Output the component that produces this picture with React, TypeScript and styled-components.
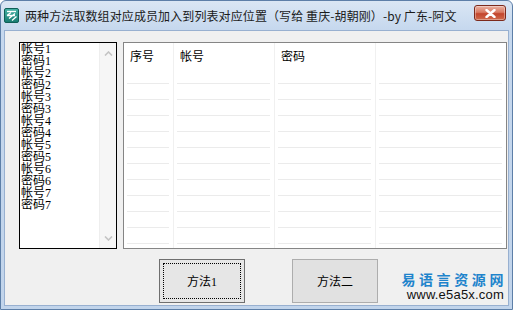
import styled, { createGlobalStyle } from 'styled-components';

const GlobalStyle = createGlobalStyle`
  html, body {
    margin: 0;
    padding: 0;
  }
  body {
    width: 513px;
    height: 310px;
    overflow: hidden;
    font-family: "Liberation Serif", "Noto Sans CJK SC", serif;
    color: #000;
  }
  * {
    box-sizing: border-box;
  }
`;

const LIST_ITEMS = [1, 2, 3, 4, 5, 6, 7].flatMap((n) => [`帐号${n}`, `密码${n}`]);
const COLUMNS = [
  { title: '序号', width: 50 },
  { title: '帐号', width: 101 },
  { title: '密码', width: 101 },
  { title: '', width: 0 },
];
const ROW_COUNT = 12;

function AppIcon() {
  return (
    <svg width="15" height="15" viewBox="0 0 15 15">
      <defs>
        <linearGradient id="ig" x1="0" y1="0" x2="0" y2="1">
          <stop offset="0" stopColor="#45b3a6" />
          <stop offset="1" stopColor="#167a70" />
        </linearGradient>
      </defs>
      <rect x="0.5" y="0.5" width="14" height="14" rx="1.5" fill="url(#ig)" stroke="#0f5f57" />
      <path d="M3 3.5H12" stroke="#fff" strokeWidth="1.4" />
      <path d="M3 7.5L7 4.5M5 10.5L11 5.5M8 12.5L12.5 8.5M3 7.5H11" stroke="#fff" strokeWidth="1.3" fill="none" />
    </svg>
  );
}

function Chevron({ up }: { up?: boolean }) {
  return (
    <svg width="9" height="5" viewBox="0 0 9 5">
      <path d={up ? 'M1 4.5L4.5 1L8 4.5' : 'M1 0.5L4.5 4L8 0.5'} stroke="#c4c4c4" strokeWidth="1.6" fill="none" />
    </svg>
  );
}

export default function App() {
  return (
    <>
      <GlobalStyle />
      <Window>
        <TitleBar>
          <AppIcon />
          <Title>两种方法取数组对应成员加入到列表对应位置（写给 重庆-胡朝刚）-by 广东-阿文</Title>
          <CloseButton>
            <svg width="11" height="9" viewBox="0 0 11 9">
              <path d="M1.5 1L9.5 8M9.5 1L1.5 8" stroke="#fff" strokeWidth="2.4" strokeLinecap="round" />
            </svg>
          </CloseButton>
        </TitleBar>
        <Client>
          <TopRow>
            <ListBox>
              <ListItems>
                {LIST_ITEMS.map((item) => (
                  <ListItem key={item}>{item}</ListItem>
                ))}
              </ListItems>
              <ScrollBar>
                <Chevron up />
                <Chevron />
              </ScrollBar>
            </ListBox>
            <Table>
              <HeaderRow>
                {COLUMNS.map((col, i) => (
                  <HeaderCell key={i} $width={col.width}>
                    {col.title}
                  </HeaderCell>
                ))}
              </HeaderRow>
              {Array.from({ length: ROW_COUNT }, (_, r) => (
                <Row key={r}>
                  {COLUMNS.map((col, i) => (
                    <Cell key={i} $width={col.width}>
                      <CellLine />
                    </Cell>
                  ))}
                </Row>
              ))}
            </Table>
          </TopRow>
          <BottomRow>
            <Button $focused>
              <FocusRect>方法1</FocusRect>
            </Button>
            <Button>方法二</Button>
            <Logo>
              <LogoName>易语言资源网</LogoName>
              <LogoUrl>www.e5a5x.com</LogoUrl>
            </Logo>
          </BottomRow>
        </Client>
      </Window>
    </>
  );
}

const Window = styled.div`
  width: 513px;
  height: 310px;
  display: flex;
  flex-direction: column;
  border: 1px solid #5d7fa8;
  border-radius: 6px 6px 0 0;
  background: linear-gradient(to bottom, #dae6f4 0, #c6d8ee 28px, #c1d4eb 100%);
`;

const TitleBar = styled.div`
  height: 29px;
  display: flex;
  align-items: center;
  padding: 0 6px 0 3px;
`;

const Title = styled.div`
  margin-left: 6px;
  font-family: "Noto Sans CJK SC", sans-serif;
  font-size: 12px;
  color: #1b1b1b;
  white-space: nowrap;
  letter-spacing: 0.1px;
`;

const CloseButton = styled.div`
  margin-left: auto;
  align-self: flex-start;
  margin-top: 4px;
  width: 32px;
  height: 16px;
  display: flex;
  align-items: center;
  justify-content: center;
  border: 1px solid #7c2a1c;
  border-radius: 3px;
  background: linear-gradient(to bottom, #eab2a2 0%, #d97a62 45%, #c3452c 55%, #cf6a4c 100%);
  box-shadow: inset 0 0 0 1px rgba(255, 255, 255, 0.35);
`;

const Client = styled.div`
  flex: 1;
  margin: 0 3px 3px 3px;
  border: 1px solid #98b0d0;
  background: #f0f0f0;
  display: flex;
  flex-direction: column;
  padding: 11px 1px 0 14px;
`;

const TopRow = styled.div`
  display: flex;
  gap: 6px;
  height: 207px;
`;

const ListBox = styled.div`
  width: 98px;
  height: 207px;
  border: 1px solid #000;
  background: #fff;
  display: flex;
`;

const ListItems = styled.div`
  flex: 1;
  padding: 0 0 0 1px;
  overflow: hidden;
`;

const ListItem = styled.div`
  font-size: 12px;
  line-height: 12px;
  height: 12px;
  white-space: nowrap;
`;

const ScrollBar = styled.div`
  width: 17px;
  background: #f6f6f6;
  border-left: 1px solid #eeeeee;
  display: flex;
  flex-direction: column;
  justify-content: space-between;
  align-items: center;
  padding: 8px 0 7px;
`;

const Table = styled.div`
  flex: 1;
  height: 207px;
  border: 1px solid #858585;
  background: #fff;
  overflow: hidden;
`;

const HeaderRow = styled.div`
  display: flex;
  height: 25px;
`;

const HeaderCell = styled.div<{ $width: number }>`
  flex: ${(p) => (p.$width ? `0 0 ${p.$width}px` : '1')};
  font-family: "Noto Sans CJK SC", sans-serif;
  font-size: 12px;
  line-height: 25px;
  padding-left: 6px;
  border-right: 1px solid #f0f0f0;
  white-space: nowrap;

  &:last-child {
    border-right: none;
  }
`;

const Row = styled.div`
  display: flex;
  height: 16px;
`;

const Cell = styled.div<{ $width: number }>`
  flex: ${(p) => (p.$width ? `0 0 ${p.$width}px` : '1')};
  padding: 0 4px 0 3px;
  border-right: 1px solid #f0f0f0;

  &:last-child {
    border-right: none;
  }
`;

const CellLine = styled.div`
  height: 16px;
  border-bottom: 1px solid #ebebeb;
`;

const BottomRow = styled.div`
  display: flex;
  align-items: flex-start;
  padding: 10px 0 0 140px;
`;

const Button = styled.div<{ $focused?: boolean }>`
  width: 86px;
  height: 44px;
  display: flex;
  align-items: center;
  justify-content: center;
  padding: 3px;
  font-size: 12px;
  border: 1px solid ${(p) => (p.$focused ? '#6f6f6f' : '#adadad')};
  background: ${(p) => (p.$focused ? '#e6e6e6' : '#e1e1e1')};

  & + & {
    margin-left: 47px;
  }
`;

const FocusRect = styled.div`
  width: 100%;
  height: 100%;
  display: flex;
  align-items: center;
  justify-content: center;
  border: 1px dotted #000;
`;

const Logo = styled.div`
  margin-left: 19px;
  margin-top: 13px;
  width: 107px;
  display: flex;
  flex-direction: column;
  align-items: flex-end;
`;

const LogoName = styled.div`
  font-family: "Noto Sans CJK SC", sans-serif;
  font-size: 14px;
  line-height: 15px;
  font-weight: 700;
  color: #1f84cc;
  letter-spacing: 3.6px;
  margin-right: -3px;
  white-space: nowrap;
`;

const LogoUrl = styled.div`
  margin-top: 1px;
  font-family: "Liberation Sans", sans-serif;
  font-size: 13px;
  line-height: 13px;
  color: #111;
  letter-spacing: 0.2px;
  white-space: nowrap;
`;
